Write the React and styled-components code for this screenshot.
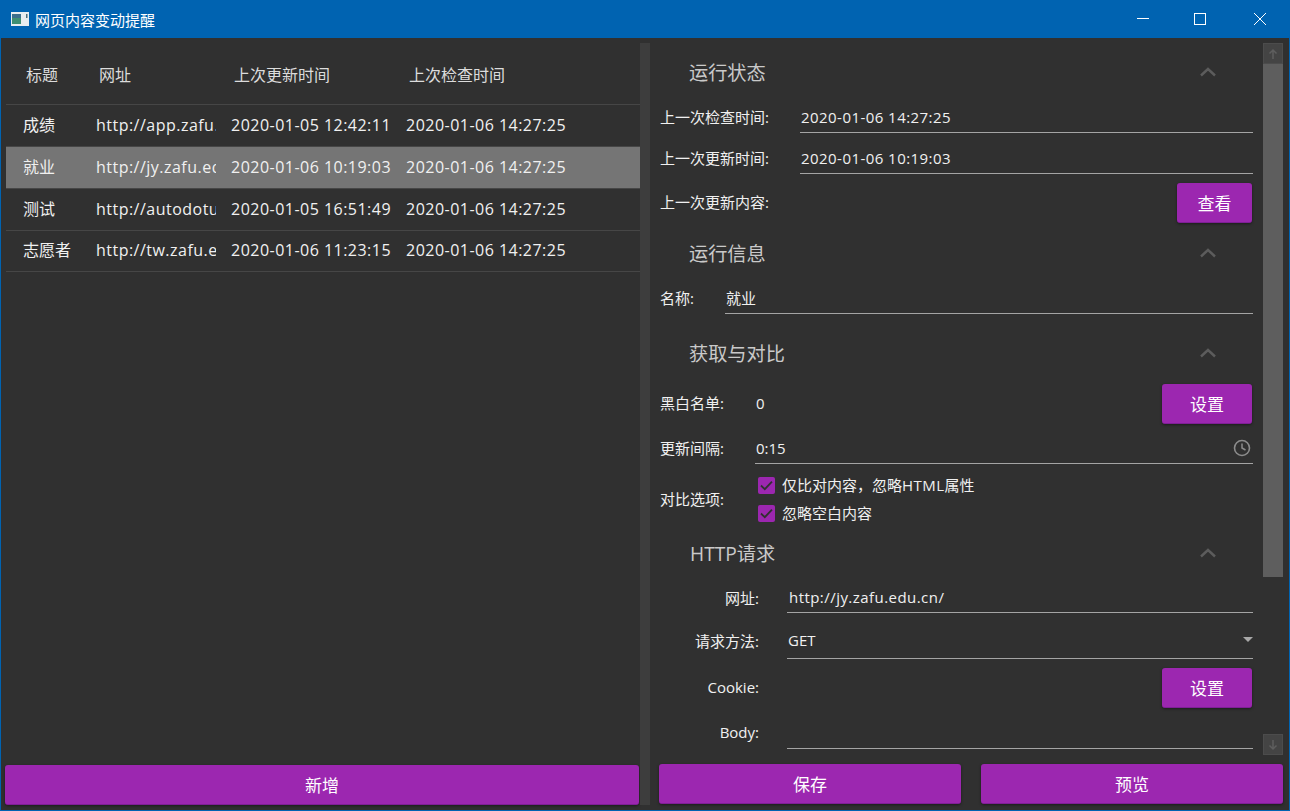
import React from "react";
import styled, { createGlobalStyle } from "styled-components";

const Global = createGlobalStyle`
  html, body { margin: 0; padding: 0; background: #303030; }
  * { box-sizing: border-box; }
  body { font-family: "Open Sans", "Noto Sans CJK SC", sans-serif; }
`;

const Win = styled.div`
  width: 1290px; height: 811px; display: flex; flex-direction: column;
  border: 1px solid #0063b1; border-top: none; background: #303030; color: #ececec; overflow: hidden;
`;
const TitleBar = styled.div`
  height: 38px; flex: none; background: #0063b1; display: flex; align-items: center; padding-left: 10px; color: #fff; font-size: 15px;
`;
const TitleText = styled.span` margin-left: 6px; flex: 1; `;
const WinBtn = styled.div`
  width: 46px; height: 38px; margin-right: ${p => p.$mr || 0}px; display: flex; align-items: center; justify-content: center;
`;
const Body = styled.div` flex: 1; display: flex; min-height: 0; `;
const LeftPane = styled.div`
  width: 639px; flex: none; display: flex; flex-direction: column; padding: 5px 1px 5px 4px;
`;
const Table = styled.div` flex: 1; margin: 0 -1px 0 1px; `;
const HeadRow = styled.div`
  height: 62px; display: grid; grid-template-columns: 73px 135px 175px 1fr; align-items: center; padding-left: 20px; border-bottom: 1px solid #464646; font-size: 16px; color: #dcdcdc;
`;
const DataRow = styled.div`
  height: 42px; display: grid; grid-template-columns: 72px 135px 175px 1fr; align-items: center; padding-left: 18px; border-bottom: 1px solid #464646; font-size: 16px; color: #f0f0f0;
  background: ${p => (p.$selected ? "#757575" : "transparent")};
  &:last-child { height: 41px; }
`;
const NameCell = styled.div` padding-bottom: 4px; margin-left: -1px; `;
const TimeCell = styled.div` padding-bottom: 2px; `;
const Latin = styled.span` letter-spacing: 0.03em; `;
const UrlCell = styled.div` width: 120px; overflow: hidden; white-space: nowrap; padding-bottom: 2px; `;
const Splitter = styled.div` width: 10px; flex: none; margin: 5px 0 5px; background: #3d3d3d; `;
const RightPane = styled.div`
  flex: 1; min-width: 0; display: flex; flex-direction: column; padding: 5px 6px 5px 9px;
`;
const ScrollArea = styled.div` height: 712px; flex: none; display: flex; padding-left: 1px; `;
const Form = styled.div` width: 593px; flex: none; `;
const Section = styled.section` padding-top: ${p => p.$top || 0}px; padding-bottom: ${p => p.$bottom || 0}px; `;
const SectionHead = styled.div`
  height: 40px; margin-bottom: 10px; padding-left: ${p => p.$pl || 29}px; padding-right: 37px; padding-bottom: 2px; display: flex; align-items: center; justify-content: space-between; font-size: 19.2px; color: #c9c9c9;
`;
const Row = styled.div`
  height: ${p => p.$h}px; padding-top: ${p => p.$pt || 0}px; display: flex; align-items: center; font-size: 15px; color: #f0f0f0;
`;
const Label = styled.div`
  width: ${p => p.$w}px; flex: none; padding-bottom: 3px; text-align: ${p => (p.$right ? "right" : "left")}; padding-right: ${p => (p.$right ? 28 : 0)}px;
`;
const Field = styled.div`
  flex: 1; height: 100%; display: flex; align-items: center; justify-content: space-between; border-bottom: 1px solid #a4a4a4;
  padding-left: ${p => p.$pl || 1}px; padding-right: ${p => p.$pr || 0}px; padding-bottom: 2px; font-size: 15px;
`;
const Value = styled.div` flex: 1; font-size: 15px; padding-left: 1px; padding-bottom: 2px; `;
const PurpleBtn = styled.button`
  width: ${p => (p.$w ? p.$w + "px" : "100%")}; height: 40px; margin: 0 ${p => (p.$w ? 1 : 0)}px 0 0; border: none; border-bottom: 1px solid #7f1f96; border-radius: 3px; background: #9c27b0; color: #fff; font: inherit; font-size: 17px; box-shadow: 0 1px 3px rgba(0,0,0,.45); padding: 0;
`;
const BtnWrap = styled.div` margin-left: auto; `;
const Checks = styled.div` display: flex; flex-direction: column; `;
const CheckRow = styled.label` height: 28px; display: flex; align-items: center; gap: 7px; font-size: 15px; color: #f0f0f0; `;
const CheckText = styled.span` display: block; padding-bottom: 2px; `;
const Box = styled.span`
  width: 17px; height: 17px; border-radius: 2px; background: #9c27b0; display: flex; align-items: center; justify-content: center; margin-left: 3px;
`;
const Scrollbar = styled.div` width: 20px; margin-left: 10px; flex: none; display: flex; flex-direction: column; `;
const ScrollBtn = styled.div` height: 21px; flex: none; background: #444; border: 1px solid #4c4c4c; display: flex; align-items: center; justify-content: center; `;
const Thumb = styled.div` flex: none; height: 513px; background: #5e5e5e; `;
const Track = styled.div` flex: 1; `;
const Footer = styled.div` margin-top: 9px; display: flex; gap: 20px; `;
const LeftFooter = styled.div` margin-top: 0; `;

const Chevron = () => (
  <svg width="16" height="10" viewBox="0 0 16 10" fill="none"><path d="M1 8.5 8 2l7 6.5" stroke="#5c5c5c" strokeWidth="2.4" /></svg>
);
const Head = ({ children, pl }) => <SectionHead $pl={pl}><span>{children}</span><Chevron /></SectionHead>;
const Tick = () => (
  <svg width="13" height="11" viewBox="0 0 13 11" fill="none"><path d="M1 5.5 4.8 9.2 12 1.6" stroke="#303030" strokeWidth="1.8" /></svg>
);
const rows = [
  ["成绩", "http://app.zafu.edu.cn/", "2020-01-05 12:42:11", "2020-01-06 14:27:25"],
  ["就业", "http://jy.zafu.edu.cn/", "2020-01-06 10:19:03", "2020-01-06 14:27:25", true],
  ["测试", "http://autodotua.top/", "2020-01-05 16:51:49", "2020-01-06 14:27:25"],
  ["志愿者", "http://tw.zafu.edu.cn/", "2020-01-06 11:23:15", "2020-01-06 14:27:25"],
];

export default function App() {
  return (
    <Win>
      <Global />
      <TitleBar>
        <svg width="18" height="14" viewBox="0 0 18 14">
          <rect width="18" height="14" fill="#e8edf0" />
          <rect x="1" y="2" width="9" height="10" fill="#3f8f73" />
          <rect x="1" y="2" width="9" height="4" fill="#3c6f8c" />
          <rect x="15" y="2" width="1.5" height="4" fill="#4c6f7c" />
        </svg>
        <TitleText>网页内容变动提醒</TitleText>
        <WinBtn $mr={11}>
          <svg width="12" height="12" viewBox="0 0 12 12"><path d="M0 5.5h12" stroke="#fff" /></svg>
        </WinBtn>
        <WinBtn $mr={14}>
          <svg width="12" height="12" viewBox="0 0 12 12" fill="none"><rect x=".5" y=".5" width="11" height="11" stroke="#fff" /></svg>
        </WinBtn>
        <WinBtn $mr={6}>
          <svg width="12" height="12" viewBox="0 0 12 12" fill="none"><path d="M0 0l12 12M12 0 0 12" stroke="#fff" /></svg>
        </WinBtn>
      </TitleBar>
      <Body>
        <LeftPane>
          <Table>
            <HeadRow><div>标题</div><div>网址</div><div>上次更新时间</div><div>上次检查时间</div></HeadRow>
            {rows.map(r => (
              <DataRow key={r[0]} $selected={r[4]}>
                <NameCell>{r[0]}</NameCell>
                <UrlCell><Latin>{r[1]}</Latin></UrlCell>
                <TimeCell><Latin>{r[2]}</Latin></TimeCell>
                <TimeCell><Latin>{r[3]}</Latin></TimeCell>
              </DataRow>
            ))}
          </Table>
          <LeftFooter><PurpleBtn>新增</PurpleBtn></LeftFooter>
        </LeftPane>
        <Splitter />
        <RightPane>
          <ScrollArea>
            <Form>
              <Section $top={10} $bottom={10}>
                <Head>运行状态</Head>
                <Row $h={30}><Label $w={140}>上一次检查时间:</Label><Field><Latin>2020-01-06 14:27:25</Latin></Field></Row>
                <Row $h={41} $pt={11}><Label $w={140}>上一次更新时间:</Label><Field><Latin>2020-01-06 10:19:03</Latin></Field></Row>
                <Row $h={50} $pt={8}><Label $w={140}>上一次更新内容:</Label><BtnWrap><PurpleBtn $w={75}>查看</PurpleBtn></BtnWrap></Row>
              </Section>
              <Section $bottom={20}>
                <Head>运行信息</Head>
                <Row $h={30}><Label $w={65}>名称:</Label><Field>就业</Field></Row>
              </Section>
              <Section $bottom={6}>
                <Head>获取与对比</Head>
                <Row $h={40}><Label $w={95}>黑白名单:</Label><Value>0</Value><PurpleBtn $w={90}>设置</PurpleBtn></Row>
                <Row $h={40} $pt={10}><Label $w={95}>更新间隔:</Label>
                  <Field $pr={2}>0:15
                    <svg width="18" height="18" viewBox="0 0 18 18" fill="none"><circle cx="9" cy="9" r="7.5" stroke="#8c8c8c" strokeWidth="1.6" /><path d="M9 4.5V9l3.5 2" stroke="#8c8c8c" strokeWidth="1.5" /></svg>
                  </Field>
                </Row>
                <Row $h={64} $pt={7}><Label $w={95}>对比选项:</Label>
                  <Checks>
                    <CheckRow><Box><Tick /></Box><CheckText>仅比对内容，忽略<Latin>HTML</Latin>属性</CheckText></CheckRow>
                    <CheckRow><Box><Tick /></Box><CheckText>忽略空白内容</CheckText></CheckRow>
                  </Checks>
                </Row>
              </Section>
              <Section>
                <Head pl={30}>HTTP请求</Head>
                <Row $h={29}><Label $w={127} $right>网址:</Label><Field $pl={2}><Latin>http://jy.zafu.edu.cn/</Latin></Field></Row>
                <Row $h={46} $pt={11}><Label $w={127} $right>请求方法:</Label>
                  <Field>GET
                    <svg width="10" height="6" viewBox="0 0 10 6"><path d="M0 0h10L5 5z" fill="#a8a8a8" /></svg>
                  </Field>
                </Row>
                <Row $h={50} $pt={8}><Label $w={127} $right>Cookie:</Label><BtnWrap><PurpleBtn $w={90}>设置</PurpleBtn></BtnWrap></Row>
                <Row $h={40} $pt={8}><Label $w={127} $right>Body:</Label><Field /></Row>
              </Section>
            </Form>
            <Scrollbar>
              <ScrollBtn><svg width="12" height="12" viewBox="0 0 12 12" fill="none"><path d="M6 11V2M2.5 5.5 6 2l3.5 3.5" stroke="#5e5e5e" strokeWidth="1.5" /></svg></ScrollBtn>
              <Thumb />
              <Track />
              <ScrollBtn><svg width="12" height="12" viewBox="0 0 12 12" fill="none"><path d="M6 1v9M2.5 6.5 6 10l3.5-3.5" stroke="#5e5e5e" strokeWidth="1.5" /></svg></ScrollBtn>
            </Scrollbar>
          </ScrollArea>
          <Footer><PurpleBtn>保存</PurpleBtn><PurpleBtn>预览</PurpleBtn></Footer>
        </RightPane>
      </Body>
    </Win>
  );
}
